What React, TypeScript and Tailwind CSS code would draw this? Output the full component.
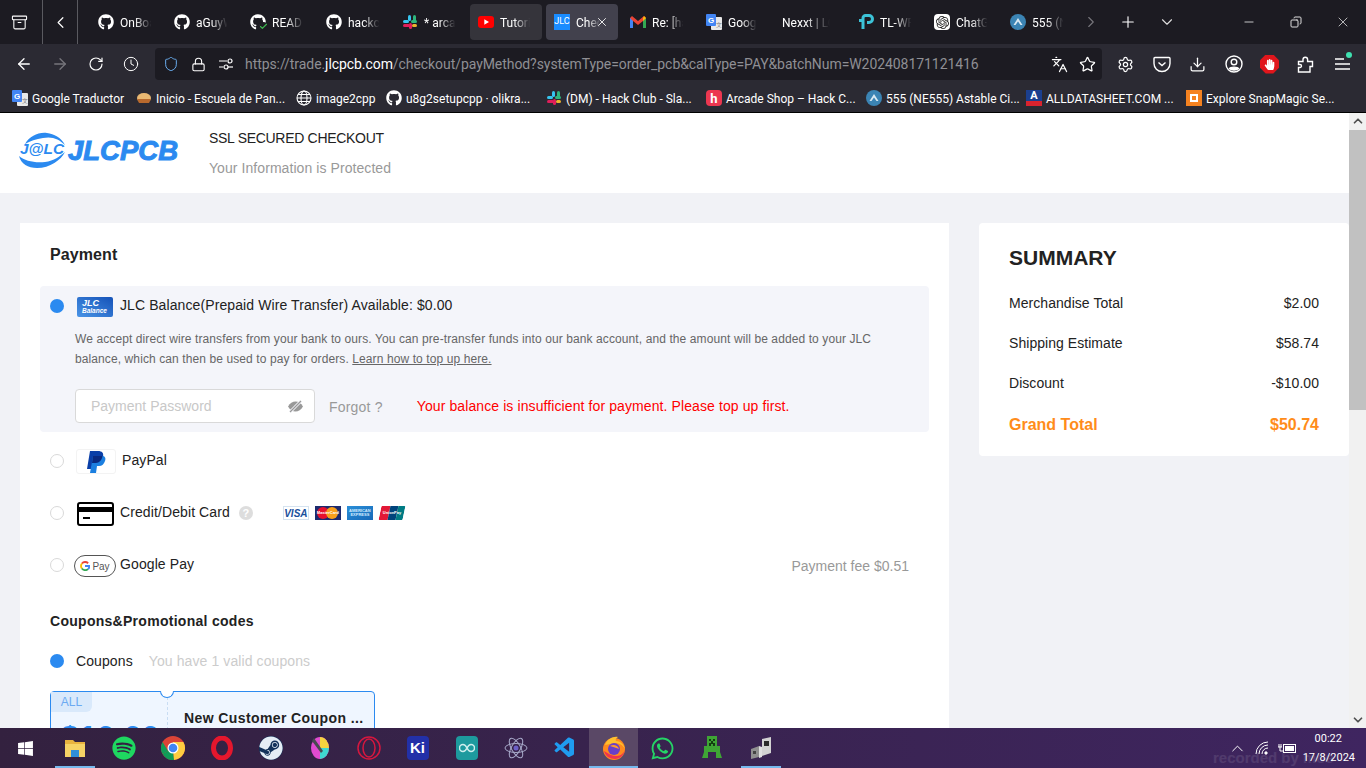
import { ReactNode } from "react";
import {
  Archive, ArrowLeft, ArrowRight, Check, ChevronDown, ChevronLeft, ChevronRight, ChevronUp, Clock, Copy, Download, Languages, Lock,
  Minus, Plus, RotateCw, Settings, Shield, Star, X,
} from "lucide-react";
import { FaGithub, FaSpotify, FaSteam, FaWhatsapp, FaWindows, FaHandPaper } from "react-icons/fa";
import { SiOpenai } from "react-icons/si";
import { VscVscode } from "react-icons/vsc";

const Slack = ({ s = 16 }: { s?: number }) => (
  <svg width={s} height={s} viewBox="0 0 16 16">
    <rect x="6" y="1" width="3" height="6" rx="1.5" fill="#36c5f0" />
    <rect x="1" y="6" width="6" height="3" rx="1.5" fill="#36c5f0" />
    <rect x="11" y="1" width="3" height="7" rx="1.5" fill="#2eb67d" />
    <rect x="9" y="6" width="6" height="3" rx="1.5" fill="#2eb67d" />
    <rect x="7" y="9" width="3" height="6" rx="1.5" fill="#e01e5a" />
    <rect x="1" y="10" width="7" height="3" rx="1.5" fill="#e01e5a" />
    <rect x="10" y="10" width="5" height="3" rx="1.5" fill="#ecb22e" />
  </svg>
);

const GTranslate = () => (
  <svg width="16" height="16" viewBox="0 0 16 16">
    <rect x="5" y="3" width="11" height="13" rx="1" fill="#e8e8e8" />
    <rect x="0" y="0" width="10" height="12" rx="1" fill="#4285f4" />
    <text x="2" y="9" fontSize="8" fontWeight="700" fill="#fff" fontFamily="Liberation Sans, sans-serif">G</text>
    <text x="10" y="13" fontSize="6" fill="#777" fontFamily="Noto Sans, sans-serif">文</text>
  </svg>
);

const Circuit = () => (
  <svg width="16" height="16" viewBox="0 0 16 16">
    <circle cx="8" cy="8" r="8" fill="#3b84b4" />
    <path d="M3.5 11 8 4l4.5 7-2 0L8 7.5 5.5 11z" fill="#d8e8f2" />
  </svg>
);

const Gmail = () => (
  <svg width="16" height="14" viewBox="0 0 16 14">
    <path d="M0 3v10h3V6l5 4 5-4v7h3V3l-2-2-6 5-6-5z" fill="#ea4335" />
    <path d="M0 3v10h3V6z" fill="#4285f4" />
    <path d="M13 6v7h3V3z" fill="#34a853" />
    <path d="M14 1l2 2-3 3V3z" fill="#fbbc04" />
  </svg>
);

const tabs: { title: string; icon?: ReactNode; bg?: string }[] = [
  { title: "OnBoard", icon: <FaGithub size={16} color="#fff" /> },
  { title: "aGuyWho", icon: <FaGithub size={16} color="#fff" /> },
  {
    title: "README",
    icon: (
      <span className="relative block h-4 w-4">
        <FaGithub size={16} color="#fff" />
        <span className="absolute bottom-[-1px] right-[-2px] rounded-full bg-[#1c1b22]">
          <Check size={9} color="#3fb950" strokeWidth={3} />
        </span>
      </span>
    ),
  },
  { title: "hackclub", icon: <FaGithub size={16} color="#fff" /> },
  { title: "* arcade", icon: <Slack /> },
  {
    title: "Tutorial",
    bg: "bg-[#35343b]",
    icon: (
      <svg width="16" height="12" viewBox="0 0 16 12">
        <rect width="16" height="12" rx="3" fill="#ff0000" />
        <path d="M6.3 3.2 11 6 6.3 8.8z" fill="#fff" />
      </svg>
    ),
  },
  {
    title: "Check",
    bg: "bg-[#42414d]",
    icon: <span className="flex h-4 w-4 items-center justify-center bg-[#1a8cff] text-[9px] text-white">JLC</span>,
  },
  { title: "Re: [hack", icon: <Gmail /> },
  { title: "Google", icon: <GTranslate /> },
  { title: "Nexxt | LOGIN" },
  {
    title: "TL-WR841",
    icon: (
      <svg width="16" height="16" viewBox="0 0 16 16" fill="none" stroke="#3cc3d8" strokeWidth="3">
        <path d="M1 6.500h4V15M5 6.500V4a2.500 2.500 0 0 1 2.500-2.500H11a3.500 3.500 0 0 1 0 7H9" />
      </svg>
    ),
  },
  {
    title: "ChatGPT",
    icon: (
      <span className="flex h-4 w-4 items-center justify-center rounded-[4px] bg-white">
        <SiOpenai size={13} color="#222" />
      </span>
    ),
  },
  { title: "555 (NE555)", icon: <Circuit /> },
];

const bookmarks: { title: string; w: string; icon: ReactNode }[] = [
  { title: "Google Traductor", w: "w-[124px]", icon: <GTranslate /> },
  {
    title: "Inicio - Escuela de Pan...",
    w: "w-[160px]",
    icon: (
      <svg width="16" height="12" viewBox="0 0 16 12">
        <ellipse cx="8" cy="6" rx="7" ry="5" fill="#e9b872" />
        <path d="M1 7h14l-2 4H3z" fill="#b8692d" />
      </svg>
    ),
  },
  {
    title: "image2cpp",
    w: "w-[90px]",
    icon: (
      <svg width="16" height="16" viewBox="0 0 16 16" fill="none" stroke="#fff" strokeWidth="1.1">
        <circle cx="8" cy="8" r="7" />
        <ellipse cx="8" cy="8" rx="3" ry="7" />
        <path d="M1 8h14M2 4.500h12M2 11.500h12" />
      </svg>
    ),
  },
  {
    title: "u8g2setupcpp · olikra...",
    w: "w-[160px]",
    icon: <FaGithub size={16} color="#fff" />,
  },
  { title: "(DM) - Hack Club - Sla...", w: "w-[160px]", icon: <Slack /> },
  {
    title: "Arcade Shop – Hack C...",
    w: "w-[160px]",
    icon: (
      <span className="flex h-4 w-4 items-center justify-center rounded-[4px] bg-[#ec3750] text-[13px] font-bold leading-none text-white">h</span>
    ),
  },
  { title: "555 (NE555) Astable Ci...", w: "w-[160px]", icon: <Circuit /> },
  {
    title: "ALLDATASHEET.COM ...",
    w: "w-[160px]",
    icon: (
      <span className="flex h-4 w-4 flex-col items-center bg-[#1b3f8f] text-[11px] font-bold leading-[11px] text-white">
        A<span className="h-[5px] w-full bg-[#d9232e]" />
      </span>
    ),
  },
  {
    title: "Explore SnapMagic Se...",
    w: "w-[160px]",
    icon: (
      <span className="flex h-4 w-4 items-center justify-center bg-[#f58220]">
        <span className="h-2 w-2 border-2 border-white" />
      </span>
    ),
  },
];

const taskIcons: { icon: ReactNode; active?: boolean; line?: boolean }[] = [
  {
    line: true,
    icon: (
      <svg width="22" height="22" viewBox="0 0 22 22">
        <path d="M1 3h8l2 2h10v15H1z" fill="#e8b33f" />
        <rect x="1" y="7" width="20" height="13" fill="#f6d365" />
        <rect x="7" y="13" width="8" height="7" fill="#2f8fd8" />
      </svg>
    ),
  },
  { icon: <FaSpotify size={24} color="#1ed760" /> },
  {
    icon: (
      <svg width="24" height="24" viewBox="0 0 24 24">
        <circle cx="12" cy="12" r="12" fill="#db4437" />
        <path d="M12 12 1.600 18A12 12 0 0 0 13 24z" fill="#0f9d58" />
        <path d="M12 6h10.400A12 12 0 0 1 13 24l-1-12z" fill="#ffcd40" />
        <path d="M1.600 18A12 12 0 0 1 1.600 6L7 15z" fill="#0f9d58" />
        <circle cx="12" cy="12" r="5.500" fill="#fff" />
        <circle cx="12" cy="12" r="4.300" fill="#4285f4" />
      </svg>
    ),
  },
  {
    icon: (
      <svg width="24" height="24" viewBox="0 0 24 24" fill="none">
        <ellipse cx="12" cy="12" rx="8.500" ry="10" stroke="#e5172d" strokeWidth="5" />
      </svg>
    ),
  },
  {
    icon: (
      <span className="flex h-6 w-6 items-center justify-center rounded-full bg-[#12325a]">
        <FaSteam size={24} color="#e4edf5" />
      </span>
    ),
  },
  {
    icon: (
      <svg width="24" height="24" viewBox="0 0 24 24">
        <ellipse cx="12" cy="12" rx="9" ry="11" fill="#e14bd0" />
        <path d="M12 1a9 11 0 0 1 9 11H12z" fill="#f5d33f" />
        <path d="M12 12h9a9 11 0 0 1-9 11z" fill="#3fd8d0" />
        <path d="M6 2l9 13-2 2L4 5z" fill="#4a4a52" />
      </svg>
    ),
  },
  {
    icon: (
      <svg width="24" height="24" viewBox="0 0 24 24" fill="none" stroke="#d5173f" strokeWidth="1.500">
        <circle cx="12" cy="12" r="11" />
        <ellipse cx="12" cy="12" rx="6" ry="9" />
      </svg>
    ),
  },
  {
    icon: (
      <span className="flex h-[24px] w-[22px] items-center justify-center rounded-[4px] bg-[#2230a8] font-['Liberation_Sans',sans-serif] text-[15px] font-bold text-white">Ki</span>
    ),
  },
  {
    icon: (
      <span className="flex h-[24px] w-[22px] items-center justify-center rounded-[4px] bg-[#1d9a9e]">
        <svg width="16" height="10" viewBox="0 0 16 10" fill="none" stroke="#cfeeee" strokeWidth="1.500">
          <path d="M8 5C6.500 2 5.500 1.500 4 1.500a3.500 3.500 0 0 0 0 7C5.500 8.500 6.500 8 8 5c1.500-3 2.500-3.500 4-3.500a3.500 3.500 0 0 1 0 7C10.500 8.500 9.500 8 8 5z" />
        </svg>
      </span>
    ),
  },
  {
    icon: (
      <svg width="24" height="24" viewBox="0 0 24 24" fill="none" stroke="#a7a9c9" strokeWidth="1">
        <ellipse cx="12" cy="12" rx="11" ry="4.500" />
        <ellipse cx="12" cy="12" rx="11" ry="4.500" transform="rotate(60 12 12)" />
        <ellipse cx="12" cy="12" rx="11" ry="4.500" transform="rotate(120 12 12)" />
        <circle cx="12" cy="12" r="2.500" fill="#6c5fc7" stroke="none" />
      </svg>
    ),
  },
  { icon: <VscVscode size={24} color="#1f9cf0" /> },
  {
    active: true,
    line: true,
    icon: (
      <svg width="24" height="24" viewBox="0 0 24 24">
        <circle cx="12" cy="13" r="11" fill="#ff8a1e" />
        <path d="M3 9C5 3 11 0 16 1c-2 1-3 3-2 4 4 0 8 3 9 8-2-4-6-6-10-6z" fill="#ffc02e" />
        <path d="M2 15c1 5 6 8 11 8 5 0 9-4 10-9-2 5-6 6-9 6-4 0-7-2-12-5z" fill="#f0344e" />
        <circle cx="12" cy="13" r="6" fill="#6a3fc7" />
        <path d="M8 10c3-2 8-1 9 3-2-1-6-2-9-3z" fill="#ff9a2e" />
      </svg>
    ),
  },
  { icon: <FaWhatsapp size={25} color="#25d366" /> },
  {
    icon: (
      <svg width="24" height="24" viewBox="0 0 24 24">
        <path d="M7 0h10v10h3v6l2 6h-6v-6H8v6H2l2-6v-6h3z" fill="#3fa535" />
        <path d="M9 3h2v2H9zm4 0h2v2h-2zm-2 2h2v2h2v3h-2V8h-2v2H9V7h2z" fill="#123d10" />
      </svg>
    ),
  },
  {
    line: true,
    icon: (
      <svg width="24" height="24" viewBox="0 0 24 24">
        <path d="M2 13l8-3v11l-8 2z" fill="#8f8f8f" />
        <path d="M10 10l3 1v10l-3 1z" fill="#e0e0e0" />
        <path d="M13 3l9-2v16l-9 3z" fill="#d2d2d2" />
        <rect x="15" y="5" width="5" height="5" fill="#2a2a2a" />
        <rect x="4" y="15" width="3" height="3" fill="#444" />
      </svg>
    ),
  },
];

const Radio = ({ on }: { on?: boolean }) =>
  on ? (
    <span className="block h-[14px] w-[14px] shrink-0 rounded-full bg-[#2b8af0]" />
  ) : (
    <span className="block h-[14px] w-[14px] shrink-0 -translate-y-px rounded-full border border-[#d9d9d9] bg-white" />
  );

function BrowserChrome() {
  return (
    <div className="shrink-0 font-['Roboto',sans-serif]">
      {/* tab strip */}
      <div className="flex h-[44px] items-center bg-[#1c1b22] text-[12px] text-white">
        <div className="flex h-full w-[43px] items-center justify-center border-r border-[#5a5a60]">
          <Archive size={17} color="#fff" strokeWidth={1.5} className="-ml-[3px]" />
        </div>
        <div className="flex h-full w-[35px] items-center justify-center border-r border-[#5a5a60]">
          <ChevronLeft size={19} color="#fff" strokeWidth={1.5} />
        </div>
        <div className="ml-[12px] flex gap-[4px]">
          {tabs.map((t) => (
            <div key={t.title} className={`relative flex h-[36px] w-[72px] items-center gap-[6px] rounded-[4px] pl-[8px] ${t.bg ?? ""}`}>
              {t.icon && <span className="flex w-4 shrink-0 justify-center">{t.icon}</span>}
              <span className="overflow-hidden whitespace-nowrap pt-px [mask-image:linear-gradient(to_right,black_35%,transparent_75%)]">{t.title}</span>
              {t.title === "Check" && <X size={14} color="#fff" strokeWidth={1.5} className="absolute right-[9px]" />}
            </div>
          ))}
        </div>
        <ChevronRight size={18} color="#77767c" strokeWidth={1.5} className="ml-[8px]" />
        <Plus size={18} color="#fff" strokeWidth={1.5} className="ml-[19px]" />
        <ChevronDown size={18} color="#ddd" strokeWidth={1.5} className="ml-[21px]" />
        <Minus size={14} color="#ddd" strokeWidth={1.5} className="ml-[66px]" />
        <Copy size={12} color="#ddd" className="ml-[34px] -scale-x-100" />
        <X size={16} color="#ddd" strokeWidth={1.2} className="ml-[33px]" />
      </div>

      {/* navigation */}
      <div className="flex h-[40px] items-center bg-[#2b2a33] text-white">
        <ArrowLeft size={18} strokeWidth={1.75} className="ml-[15px]" />
        <ArrowRight size={18} color="#77767c" strokeWidth={1.75} className="ml-[18px]" />
        <RotateCw size={16} strokeWidth={1.75} className="ml-[19px]" />
        <Clock size={16} strokeWidth={1.5} className="ml-[19px]" />
        <div className="ml-[16px] flex h-[32px] w-[947px] items-center rounded-[4px] bg-[#1c1b22]">
          <Shield size={16} color="#6aaef0" strokeWidth={1.5} className="ml-[8px]" />
          <Lock size={15} strokeWidth={1.75} className="ml-[12px]" />
          <svg width="14" height="12" viewBox="0 0 14 12" fill="none" stroke="#fff" strokeWidth="1.200" className="ml-[13px]">
            <path d="M0 3h8M0 9h4" />
            <circle cx="11" cy="3" r="2" />
            <circle cx="7" cy="9" r="2" />
            <path d="M9 9h5" />
          </svg>
          <span className="ml-[12px] w-[790px] whitespace-nowrap pt-px text-[14px] tracking-[-0.067px] text-[#8f8f94]">
            https://trade.<span className="text-white">jlcpcb.com</span>/checkout/payMethod?systemType=order_pcb&calType=PAY&batchNum=W202408171121416
          </span>
          <Languages size={17} strokeWidth={1.75} className="ml-[16px]" />
          <Star size={17} strokeWidth={1.75} className="ml-[11px]" />
        </div>
        <Settings size={17} strokeWidth={1.75} className="ml-[15px]" />
        <svg width="18" height="18" viewBox="0 0 18 18" fill="none" stroke="#fff" strokeWidth="1.400" className="ml-[19px]">
          <path d="M2 2.500h14a1 1 0 0 1 1 1v5a8 8 0 0 1-16 0v-5a1 1 0 0 1 1-1z" />
          <path d="M5.500 7.500 9 10.500l3.500-3" />
        </svg>
        <Download size={17} strokeWidth={1.75} className="ml-[18px]" />
        <svg width="18" height="18" viewBox="0 0 18 18" fill="none" stroke="#fff" strokeWidth="1.400" className="ml-[19px]">
          <circle cx="9" cy="9" r="8" />
          <circle cx="9" cy="7" r="2.800" />
          <path d="M4.500 13.500c1-1.800 8-1.800 9 0-2 2-7 2-9 0z" fill="#fff" />
        </svg>
        <span className="ml-[17px] flex h-[19px] w-[19px] items-center justify-center bg-[#e0161c] [clip-path:polygon(30%_0,70%_0,100%_30%,100%_70%,70%_100%,30%_100%,0_70%,0_30%)]">
          <FaHandPaper size={11} color="#fff" />
        </span>
        <svg width="18" height="18" viewBox="0 0 18 18" fill="none" stroke="#fff" strokeWidth="1.400" className="ml-[18px]">
          <path d="M1.500 6.500h4.500V4.500a2.300 2.300 0 0 1 4.600 0v2h4.900v5H13v5.500H1.500v-4.500h1.500a1.500 1.500 0 0 0 0-3h-1.500z" />
        </svg>
        <span className="relative ml-[19px]">
          <svg width="17" height="14" viewBox="0 0 17 14" stroke="#fff" strokeWidth="1.500">
            <path d="M1 2h9M1 7h15M1 12h15" />
          </svg>
          <span className="absolute right-[-1px] top-[-5px] h-[6px] w-[6px] rounded-full bg-[#3fe1b0]" />
        </span>
      </div>

      {/* bookmarks */}
      <div className="flex h-[28px] items-center bg-[#2b2a33] pl-[12px] text-[12px] text-white">
        {bookmarks.map((b) => (
          <div key={b.title} className={`flex items-center gap-[4px] whitespace-nowrap ${b.w}`}>
            <span className="flex w-4 shrink-0 justify-center">{b.icon}</span>
            <span className="pt-[2px]">{b.title}</span>
          </div>
        ))}
      </div>
      <div className="h-px bg-black" />
    </div>
  );
}

function CardLogos() {
  return (
    <div className="ml-[30px] flex -translate-y-px items-center gap-[6px] font-['Liberation_Sans',sans-serif]">
      <span className="flex h-[14px] w-[26px] items-center justify-center border border-[#d5e3f0] bg-white text-[10px] font-bold italic tracking-normal text-[#1a4f9c]">VISA</span>
      <span className="relative flex h-[14px] w-[26px] items-center justify-center overflow-hidden bg-[#1c2a6e]">
        <span className="h-[12px] w-[12px] rounded-full bg-[#e8112d]" />
        <span className="-ml-[3px] h-[12px] w-[12px] rounded-full bg-[#f9a01b]" />
        <span className="absolute text-[4px] font-bold leading-none tracking-normal text-white">MasterCard</span>
      </span>
      <span className="flex h-[14px] w-[26px] items-center justify-center bg-gradient-to-br from-[#2a8fd8] to-[#1769b8] text-center text-[4px] font-bold leading-[4px] tracking-normal text-[#d4ecff]">AMERICAN EXPRESS</span>
      <span className="relative ml-px flex h-[14px] w-[24px] -skew-x-12 overflow-hidden rounded-[1px]">
        <span className="w-[9px] bg-[#e21836]" />
        <span className="w-[8px] bg-[#00447c]" />
        <span className="flex-1 bg-[#007b84]" />
        <span className="absolute inset-0 flex skew-x-12 items-center justify-center text-[4px] font-bold leading-none tracking-normal text-white">UnionPay</span>
      </span>
    </div>
  );
}

function PaymentCard() {
  return (
    <div className="w-[929px] shrink-0 bg-white px-[20px] pt-[21px] tracking-[0.1px]">
      <h2 className="ml-[10px] h-[42px] text-[16px] font-bold leading-[22px] text-[#222]">Payment</h2>

      <div className="h-[146px] rounded-[4px] bg-[#f4f5fa] pl-[10px] pt-[10px]">
        <div className="flex h-[20px] items-center">
          <Radio on />
          <span className="ml-[13px] flex h-[20px] w-[36px] translate-y-px flex-col justify-center rounded-[2px] bg-gradient-to-bl from-[#1552b8] to-[#4a94e6] pl-[5px] text-[9px] font-bold italic leading-[8px] tracking-normal text-white">
            <span>JLC</span>
            <span className="text-[6.500px]">Balance</span>
          </span>
          <span className="ml-[7px] -translate-y-px text-[14px] text-[#222]">JLC Balance(Prepaid Wire Transfer) Available: $0.00</span>
        </div>
        <p className="ml-[25px] mt-[13px] w-[820px] text-[12px] leading-[20px] text-[#666]">
          We accept direct wire transfers from your bank to ours. You can pre-transfer funds into our bank account, and the amount will be added to your JLC balance, which can then be used to pay for orders.{" "}
          <span className="underline">Learn how to top up here.</span>
        </p>
        <div className="ml-[25px] mt-[20px] flex items-center text-[14px]">
          <div className="flex h-[34px] w-[240px] items-center justify-between rounded-[4px] border border-[#d9d9d9] bg-white pl-[15px] pr-[11px]">
            <span className="tracking-normal text-[#c8c8c8]">Payment Password</span>
            <svg width="15" height="13" viewBox="0 0 15 13">
              <path d="M0 6.500C2 3 4.500 1.500 7.500 1.500S13 3 15 6.500C13 10 10.500 11.500 7.500 11.500S2 10 0 6.500z" fill="#999" />
              <path d="M2 12 13 1" stroke="#f4f5fa" strokeWidth="3" />
              <path d="M2 12 13 1" stroke="#999" strokeWidth="1.300" />
            </svg>
          </div>
          <span className="ml-[14px] translate-y-px tracking-[0.2px] text-[#999]">Forgot ?</span>
          <span className="ml-[34px] text-[#f00]">Your balance is insufficient for payment. Please top up first.</span>
        </div>
      </div>

      <div className="mt-[17px] flex h-[25px] items-center pl-[10px] text-[14px] text-[#222]">
        <Radio />
        <span className="ml-[12px] flex h-[25px] w-[40px] items-center justify-center rounded-[3px] border border-[#f3f3f3]">
          <svg width="20" height="22" viewBox="0 0 20 22">
            <path d="M4 0h8c4 0 6 2 5 6-1 4-4 6-7 6H8l-1 6H1z" fill="#0a3fa8" />
            <path d="M7 5h9c3 0 4 2 3 5-1 3-3 5-6 5h-2l-1 7H4z" fill="#1b7fe0" />
            <path d="M7 5h9.500C16 9 13 12 10 12H6z" fill="#0a2a80" />
          </svg>
        </span>
        <span className="ml-[6px] -translate-y-px">PayPal</span>
      </div>

      <div className="mt-[28px] flex h-[24px] items-center pl-[10px] text-[14px] text-[#222]">
        <Radio />
        <span className="ml-[13px] flex h-[24px] w-[37px] flex-col justify-start rounded-[3px] border-2 border-black pt-[3px]">
          <span className="h-[5px] bg-black" />
          <span className="ml-[4px] mt-[5px] h-[2px] w-[7px] bg-black" />
        </span>
        <span className="ml-[6px] -translate-y-[2px]">Credit/Debit Card</span>
        <span className="ml-[9px] flex h-[14px] w-[14px] -translate-y-px items-center justify-center rounded-full bg-[#ddd] text-[11px] font-bold text-white">?</span>
        <CardLogos />
      </div>

      <div className="mt-[29px] flex h-[22px] items-center pl-[10px] text-[14px] text-[#222]">
        <Radio />
        <span className="ml-[10px] flex h-[22px] w-[42px] items-center justify-center gap-[2px] rounded-full border border-[#555] text-[10px] tracking-normal text-[#555]">
          <svg width="10" height="10" viewBox="0 0 16 16" fill="none" strokeWidth="3">
            <path d="M13 3.500A7 7 0 0 0 3 4" stroke="#ea4335" />
            <path d="M3 4a7 7 0 0 0 0 8" stroke="#fbbc04" />
            <path d="M3 12a7 7 0 0 0 10 1" stroke="#34a853" />
            <path d="M13 13a7 7 0 0 0 2-5H8" stroke="#4285f4" />
          </svg>
          Pay
        </span>
        <span className="ml-[4px] -translate-y-[2px]">Google Pay</span>
        <span className="ml-auto mr-[20px] tracking-normal text-[#999]">Payment fee $0.51</span>
      </div>

      <h3 className="ml-[10px] mt-[34px] text-[14px] font-bold leading-[20px] tracking-[0.28px] text-[#222]">Coupons&Promotional codes</h3>

      <div className="mt-[20px] flex h-[20px] items-center pl-[10px] text-[14px]">
        <Radio on />
        <span className="ml-[12px] text-[#222]">Coupons</span>
        <span className="ml-[16px] text-[#ccc]">You have 1 valid coupons</span>
      </div>

      <div className="relative ml-[10px] mt-[20px] flex h-[80px] w-[325px] rounded-[4px] border border-[#2b8af0] bg-[#eff6ff]">
        <span className="absolute left-[109px] top-[-1px] h-[7px] w-[14px] rounded-b-full border border-t-0 border-[#2b8af0] bg-white" />
        <div className="w-[117px] border-r border-dashed border-[#c9ddf3]">
          <span className="block h-[20px] w-[41px] rounded-br-[6px] bg-[#d9e9fb] text-center text-[12px] leading-[20px] text-[#6ba9f2]">ALL</span>
          <span className="ml-[10px] mt-[7px] block text-[32px] font-bold leading-[36px] text-[#2b8af0]">$10.00</span>
        </div>
        <span className="ml-[16px] mt-[16px] text-[14px] font-bold leading-[20px] tracking-[0.4px] text-[#222]">New Customer Coupon ...</span>
      </div>
    </div>
  );
}

function SummaryCard() {
  const rows = [
    ["Merchandise Total", "$2.00"],
    ["Shipping Estimate", "$58.74"],
    ["Discount", "-$10.00"],
  ];
  return (
    <div className="h-[233px] w-[370px] shrink-0 rounded-[4px] bg-white px-[30px] pt-[21px]">
      <h2 className="h-[29px] text-[21px] font-bold leading-[28px] text-[#222]">SUMMARY</h2>
      <div className="mt-[10px]">
        {rows.map(([k, v]) => (
          <div key={k} className="flex h-[40px] items-center justify-between text-[14px] tracking-[0.05px] text-[#222]">
            <span>{k}</span>
            <span>{v}</span>
          </div>
        ))}
      </div>
      <div className="mt-[2px] flex h-[40px] items-center justify-between text-[16px] font-bold text-[#ff8c1a]">
        <span>Grand Total</span>
        <span>$50.74</span>
      </div>
    </div>
  );
}

function Taskbar() {
  return (
    <div className="relative z-10 flex h-[40px] shrink-0 items-center bg-gradient-to-r from-[#33213f] to-[#3f2560] font-['Roboto',sans-serif] text-white">
      <span className="absolute left-[1213px] top-[19px] whitespace-nowrap font-['Liberation_Sans',sans-serif] text-[15px] font-bold text-white/10">recorded by moe</span>
      <div className="flex w-[50px] justify-center">
        <FaWindows size={17} color="#fff" />
      </div>
      {taskIcons.map((t, i) => (
        <div key={i} className={`relative flex h-[40px] w-[49px] items-center justify-center ${t.active ? "bg-[#5a4866]" : ""}`}>
          {t.icon}
          {t.line && <span className={`absolute bottom-0 h-[2px] bg-[#76b9ed] ${t.active ? "w-full" : "w-[40px]"}`} />}
        </div>
      ))}
      <div className="relative ml-auto flex items-center">
        <ChevronUp size={19} color="#fff" strokeWidth={1.25} className="-mr-[2px]" />
        <svg width="16" height="14" viewBox="0 0 16 14" fill="none" stroke="#fff" strokeWidth="1" className="ml-[10px]">
          <path d="M1 13A12 12 0 0 1 13 1M4 13a9 9 0 0 1 9-9M7 13a6 6 0 0 1 6-6" />
          <circle cx="11" cy="12" r="1.200" fill="#fff" />
        </svg>
        <svg width="18" height="12" viewBox="0 0 18 12" className="ml-[7px]">
          <rect x="5.500" y="2.500" width="12" height="8" fill="none" stroke="#fff" />
          <rect x="7" y="4" width="9" height="5" fill="#fff" />
          <path d="M0 5h4M1 2v3M3 2v3M2 5v4h4" stroke="#fff" fill="none" />
        </svg>
        <div className="ml-[9px] mr-[11px] flex w-[50px] flex-col items-end text-[11px] leading-[19px]">
          <span className="mr-[13px]">00:22</span>
          <span className="whitespace-nowrap">17/8/2024</span>
        </div>
      </div>
    </div>
  );
}

export default function App() {
  return (
    <div className="flex h-screen w-[1366px] flex-col overflow-hidden bg-[#f1f2f6] font-['Liberation_Sans',Arial,sans-serif]">
      <BrowserChrome />
      <div className="flex min-h-0 flex-1">
        <div className="min-w-0 flex-1 overflow-hidden">
          <header className="flex h-[80px] bg-white pl-[19px]">
            <svg width="160" height="40" viewBox="0 0 160 40" className="mt-[19px] shrink-0">
              <path d="M6 12C11 4 19 0 28 1c7 1 14 4 18 12-6-6-13-9-22-7-7 1-13 3-18 6z" fill="#2b8af0" />
              <path d="M0 24c2 8 9 12 18 12 13 0 24-8 28-16-5 4-11 9-20 10C15 31 6 29 0 24z" fill="#2b8af0" />
              <text x="1" y="22" fontFamily="Liberation Sans, sans-serif" fontStyle="italic" fontWeight="700" fontSize="15" textLength="44" lengthAdjust="spacingAndGlyphs" fill="#2b8af0">J@LC</text>
              <text x="49" y="28" fontFamily="Liberation Sans, sans-serif" fontStyle="italic" fontWeight="700" fontSize="27" textLength="110" lengthAdjust="spacingAndGlyphs" stroke="#2b8af0" strokeWidth="1" fill="#2b8af0">JLCPCB</text>
            </svg>
            <div className="ml-[30px] pt-[15px] text-[14px] leading-[20px]">
              <div className="tracking-[-0.3px] text-[#222]">SSL SECURED CHECKOUT</div>
              <div className="mt-[10px] tracking-[0.07px] text-[#999]">Your Information is Protected</div>
            </div>
          </header>
          <main className="flex gap-[30px] pl-[20px] pt-[30px]">
            <PaymentCard />
            <SummaryCard />
          </main>
        </div>
        {/* scrollbar */}
        <div className="flex w-[17px] shrink-0 flex-col items-center bg-[#f1f1f1]">
          <ChevronUp size={14} color="#505050" strokeWidth={3} className="mt-px" />
          <div className="mt-[2px] h-[280px] w-full bg-[#c1c1c1]" />
          <ChevronDown size={14} color="#505050" strokeWidth={3} className="mb-px mt-auto" />
        </div>
      </div>
      <Taskbar />
    </div>
  );
}
